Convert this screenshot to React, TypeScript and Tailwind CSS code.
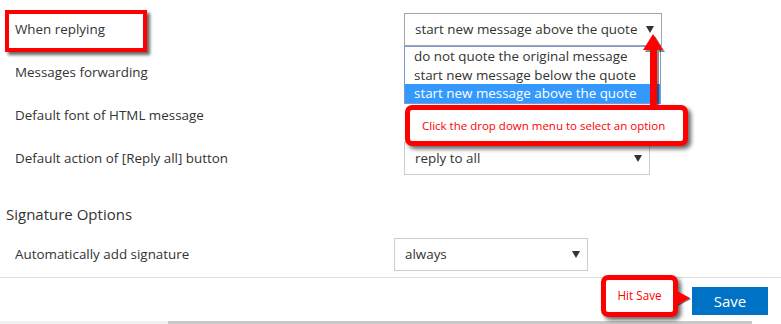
import type { ReactNode } from 'react';

function Caret() {
  return (
    <svg width="8" height="7" viewBox="0 0 8 7" className="shrink-0">
      <path d="M0 0 L8 0 L4 7 Z" fill="#333" />
    </svg>
  );
}

function Select({ value, width, open }: { value: string; width: string; open?: boolean }) {
  return (
    <div
      className={`flex h-[33px] items-center justify-between border bg-white pl-[10px] pr-[7px] text-[13.4px] ${width} ${
        open ? 'border-[#a6a6a6]' : 'border-[#cccccc]'
      }`}
    >
      <span>{value}</span>
      <Caret />
    </div>
  );
}

function Row({ label, children, labelWidth = 'w-[404px]' }: { label: string; children?: ReactNode; labelWidth?: string }) {
  return (
    <div className="flex h-[43px] items-center">
      <div className={`${labelWidth} shrink-0 pl-[15px] text-[13.4px]`}>{label}</div>
      {children}
    </div>
  );
}

export default function App() {
  return (
    <div className="relative h-[324px] w-[781px] overflow-hidden bg-white font-['Open_Sans',sans-serif] text-[#333]">
      <div className="pt-[8px]">
        <Row label="When replying">
          <Select value="start new message above the quote" width="w-[258px]" open />
        </Row>
        <Row label="Messages forwarding" />
        <Row label="Default font of HTML message" />
        <Row label="Default action of [Reply all] button">
          <Select value="reply to all" width="w-[246px]" />
        </Row>

        <h3 className="mt-[24px] pl-[6px] text-[15px] leading-[20px]">Signature Options</h3>

        <div className="mt-[9px]">
          <Row label="Automatically add signature" labelWidth="w-[394px]">
            <Select value="always" width="w-[194px]" />
          </Row>
        </div>

        <div className="mt-[1px] border-t border-[#dddddd]" />

        <div className="flex justify-end pr-[13px] pt-[9px]">
          <button className="h-[28px] w-[76px] bg-[#0072c6] text-[15px] text-white">Save</button>
        </div>
      </div>

      {/* horizontal scrollbar */}
      <div className="absolute bottom-0 left-0 flex h-[3px] w-full">
        <div className="w-[168px] bg-[#f0f0f0]" />
        <div className="w-[584px] bg-[#c8c8c8]" />
      </div>

      {/* open dropdown list */}
      <div className="absolute left-[404px] top-[46px] w-[257px] border border-[#7a9cd3] bg-white text-[13.4px] leading-[18.5px]">
        <div className="pl-[9px]">do not quote the original message</div>
        <div className="pl-[9px]">start new message below the quote</div>
        <div className="bg-[#3399ff] pl-[9px] text-white">start new message above the quote</div>
      </div>

      {/* red box around label */}
      <div className="absolute left-[5px] top-[10px] h-[42px] w-[142px] border-4 border-[#ff0000] shadow-[3px_3px_3px_rgba(0,0,0,0.6)]" />

      {/* arrow pointing up to caret */}
      <svg className="absolute left-[640px] top-[30px]" width="30" height="82" viewBox="0 0 30 82">
        <path d="M13 4 L23 20 L17 20 L17 80 L10 80 L10 20 L3 20 Z" fill="rgba(0,0,0,0.45)" transform="translate(2 2)" />
        <path d="M13 4 L23 20 L17 20 L17 80 L10 80 L10 20 L3 20 Z" fill="#ff0000" />
      </svg>

      {/* callout under dropdown */}
      <div className="absolute left-[405px] top-[105px] flex h-[41px] w-[283px] items-center rounded-[7px] border-[5px] border-[#ff0000] bg-white pl-[12px] text-[11.5px] text-[#ff0000] shadow-[3px_3px_4px_rgba(0,0,0,0.6)]">
        Click the drop down menu to select an option
      </div>

      {/* Hit Save callout */}
      <div className="absolute left-[601px] top-[275px] flex h-[42px] w-[77px] items-center justify-center rounded-[7px] border-[5px] border-[#ff0000] bg-white text-[11.7px] text-[#ff0000] shadow-[3px_3px_4px_rgba(0,0,0,0.6)]">
        Hit Save
      </div>
      <svg className="absolute left-[677px] top-[290px]" width="16" height="16" viewBox="0 0 16 16">
        <path d="M0 1 L13 8 L0 15 Z" fill="rgba(0,0,0,0.5)" transform="translate(1 1)" />
        <path d="M0 1 L13 8 L0 15 Z" fill="#ff0000" />
      </svg>
    </div>
  );
}
